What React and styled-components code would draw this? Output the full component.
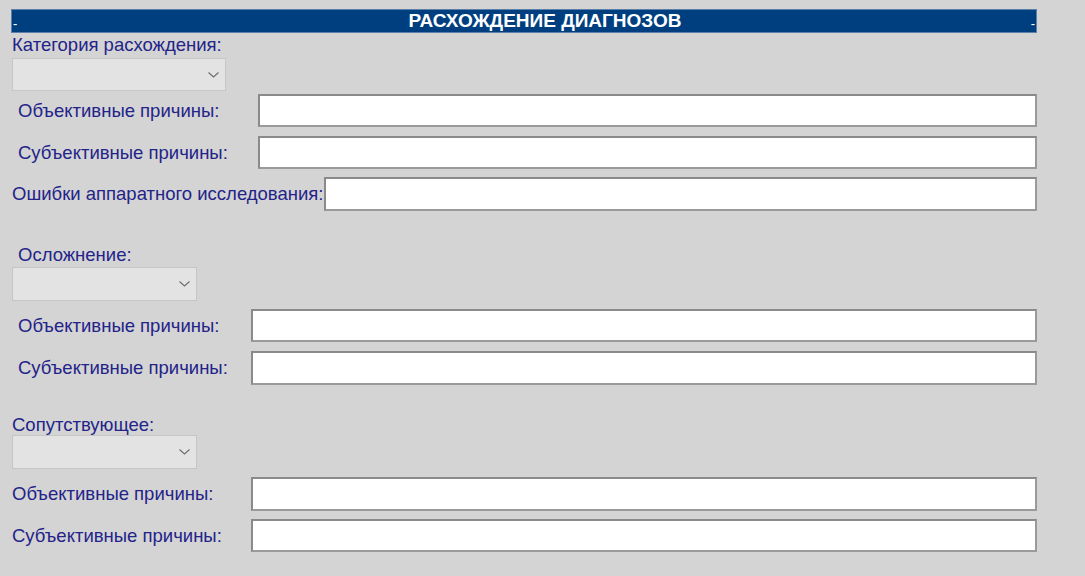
import React from 'react';
import styled, {createGlobalStyle} from 'styled-components';

const Global = createGlobalStyle`
html, body {
margin: 0;
padding: 0;
background: #d4d4d4;
}
body {
font-family: "Liberation Sans", Arial, sans-serif;
}
`;

const Page = styled.div`
width: 1026px;
margin-left: 11px;
padding-top: 9px;
display: flex;
flex-direction: column;
`;

const Header = styled.div`
height: 24px;
box-sizing: border-box;
background: #003f7f;
border: 1px solid #5a80aa;
color: #fff;
display: flex;
align-items: center;
`;

const Dash = styled.span`
font-size: 13px;
line-height: 1;
padding: 0 1px;
margin-top: 5px;
`;

const Title = styled.div`
flex: 1;
text-align: center;
padding-left: 42px;
font-size: 19px;
line-height: 22px;
font-weight: bold;
`;

const Caption = styled.div`
color: #232389;
font-size: 18.5px;
line-height: 20px;
margin-top: ${p => p.top}px;
padding-left: ${p => p.indent}px;
white-space: nowrap;
`;

const SelectBox = styled.div`
position: relative;
width: ${p => p.width}px;
height: ${p => p.height}px;
box-sizing: border-box;
margin-top: ${p => p.top}px;
margin-left: 1px;
background: #e3e3e3;
border: 1px solid #c6c6c6;
`;

const Chevron = styled.svg`
position: absolute;
right: 6px;
top: 50%;
margin-top: -3px;
`;

const Row = styled.div`
display: flex;
align-items: center;
margin-top: ${p => p.top}px;
padding-left: ${p => p.indent}px;
`;

const Label = styled.label`
width: ${p => p.width}px;
flex: none;
color: #232389;
font-size: 18.5px;
white-space: nowrap;
`;

const Field = styled.input`
flex: 1;
height: ${p => p.height || 33}px;
box-sizing: border-box;
border: 2px solid #8a8a8a;
border-right-color: #9a9a9a;
border-bottom-color: #9a9a9a;
background: #fff;
outline: none;
padding: 0 4px;
margin: 0;
`;

const Select = ({width, height, top}) => (
    <SelectBox width={width} height={height} top={top}>
        <Chevron width='11' height='6' viewBox='0 0 11 6'>
            <path d='M0.5 0.5 L5.5 5 L10.5 0.5' fill='none' stroke='#6d6d6d' strokeWidth='1.1' />
        </Chevron>
    </SelectBox>
);

const App = () => {

    return (
        <>
            <Global />
            <Page>

                <Header>
                    <Dash>-</Dash>
                    <Title>РАСХОЖДЕНИЕ ДИАГНОЗОВ</Title>
                    <Dash>-</Dash>
                </Header>

                <Caption top={2} indent={1}>Категория расхождения:</Caption>
                <Select width={214} height={33} top={3} />

                <Row top={3} indent={7}>
                    <Label width={240}>Объективные причины:</Label>
                    <Field />
                </Row>
                <Row top={9} indent={7}>
                    <Label width={240}>Субъективные причины:</Label>
                    <Field />
                </Row>
                <Row top={8} indent={1}>
                    <Label width={312}>Ошибки аппаратного исследования:</Label>
                    <Field height={34} />
                </Row>

                <Caption top={34} indent={7}>Осложнение:</Caption>
                <Select width={185} height={34} top={2} />

                <Row top={8} indent={7}>
                    <Label width={233}>Объективные причины:</Label>
                    <Field />
                </Row>
                <Row top={9} indent={7}>
                    <Label width={233}>Субъективные причины:</Label>
                    <Field height={34} />
                </Row>

                <Caption top={30} indent={1}>Сопутствующее:</Caption>
                <Select width={185} height={34} top={0} />

                <Row top={8} indent={1}>
                    <Label width={239}>Объективные причины:</Label>
                    <Field height={34} />
                </Row>
                <Row top={8} indent={1}>
                    <Label width={239}>Субъективные причины:</Label>
                    <Field />
                </Row>

            </Page>
        </>
    )

}

export default App;
